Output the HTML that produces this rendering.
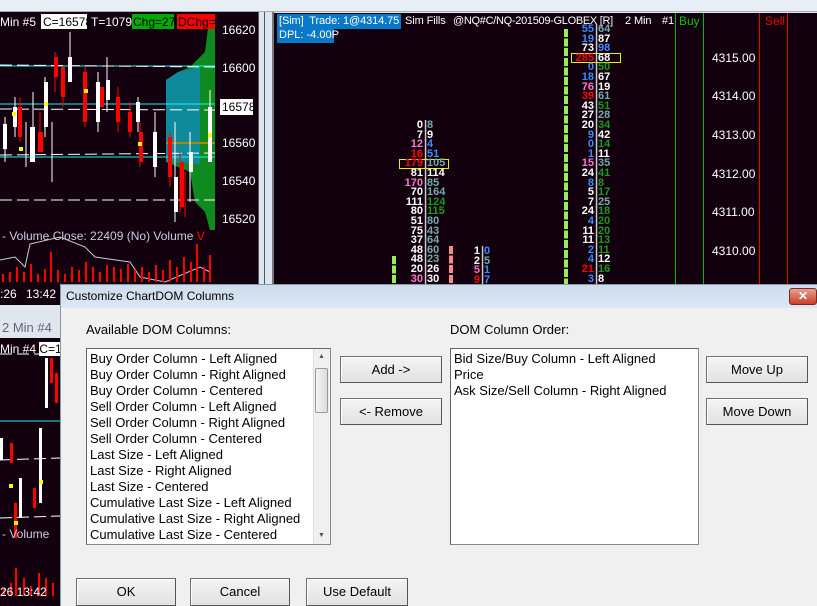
<!DOCTYPE html>
<html><head><meta charset="utf-8"><style>
*{margin:0;padding:0;box-sizing:border-box}
body{width:817px;height:606px;overflow:hidden;background:#dce6f0;position:relative;font-family:"Liberation Sans",sans-serif}
.a{position:absolute}
.dk{background:#12000f}
.n{position:absolute;font:bold 11px "Liberation Sans",sans-serif;line-height:10px;white-space:nowrap}
.btn{position:absolute;background:linear-gradient(#f4f4f4,#e2e2e2);border:1px solid #707070;border-right-color:#555;border-bottom-color:#555;box-shadow:inset 1px 1px 0 #fff;font-size:13px;color:#000;text-align:center;line-height:26px}
.lb{position:absolute;background:#fff;border:1px solid #828790;border-top-color:#666;border-left-color:#666;font-size:13px;line-height:16px;color:#000;padding:2px 3px;white-space:nowrap;overflow:hidden}
.t{font-size:12px;color:#fff;position:absolute;white-space:nowrap}
.h{font-size:11px;letter-spacing:-0.1px;top:15px}
</style></head><body>
<div class="a" style="left:0;top:0;width:817px;height:12px;background:#e8eef5;border-bottom:1px solid #aab"></div>
<div class="a dk" style="left:0;top:12px;width:258px;height:293px"></div>
<div class="a" style="left:258px;top:12px;width:1px;height:293px;background:#555"></div>
<div class="a" style="left:264px;top:12px;width:1px;height:272px;background:#555"></div>
<div class="a" style="left:272px;top:12px;width:2px;height:272px;background:#777"></div>
<svg class="a" style="left:0;top:12px" width="258" height="293">
<polygon points="215,15 208,16 205,40 190,55 178,60 166,68 166,150 190,160 195,190 205,200 210,218 215,218" fill="#0e8a1e"/>
<polygon points="200,55 178,60 166,68 166,150 200,152" fill="#0f8a9a"/>
<line x1="0" y1="54" x2="215" y2="54" stroke="#2ee" stroke-width="1"/>
<line x1="0" y1="92" x2="215" y2="92" stroke="#2ee"/>
<line x1="0" y1="145" x2="215" y2="145" stroke="#2ee"/>
<line x1="166" y1="131" x2="215" y2="131" stroke="#a80" stroke-width="2"/>
<path d="M0,53 L215,55 M0,97 L215,98 M0,143 L215,141 M0,188 L215,188" stroke="#fff" stroke-dasharray="12,5" fill="none"/>
<g stroke="#fff">
<line x1="5" y1="105" x2="5" y2="150"/><line x1="15" y1="85" x2="15" y2="125"/><line x1="33" y1="80" x2="33" y2="130"/><line x1="52" y1="110" x2="52" y2="170"/><line x1="26" y1="110" x2="26" y2="155"/><line x1="45" y1="65" x2="45" y2="125"/><line x1="70" y1="20" x2="70" y2="70"/><line x1="98" y1="60" x2="98" y2="120"/><line x1="107" y1="45" x2="107" y2="100"/><line x1="138" y1="85" x2="138" y2="120"/><line x1="155" y1="100" x2="155" y2="165"/><line x1="175" y1="110" x2="175" y2="210"/><line x1="190" y1="120" x2="190" y2="190"/><line x1="210" y1="78" x2="210" y2="150"/>
</g>
<g fill="#fff"><rect x="3" y="112" width="4" height="25"/><rect x="13" y="95" width="4" height="20"/><rect x="30" y="115" width="5" height="35"/><rect x="44" y="70" width="4" height="45"/><rect x="68" y="45" width="4" height="25"/><rect x="96" y="70" width="4" height="40"/><rect x="106" y="68" width="4" height="20"/><rect x="136" y="90" width="4" height="20"/><rect x="153" y="120" width="4" height="35"/><rect x="174" y="165" width="4" height="35"/><rect x="189" y="140" width="4" height="20"/><rect x="208" y="95" width="4" height="55"/></g>
<g stroke="#f00"><line x1="20" y1="85" x2="20" y2="130"/><line x1="40" y1="100" x2="40" y2="140"/><line x1="55" y1="40" x2="55" y2="80"/><line x1="63" y1="60" x2="63" y2="95"/><line x1="85" y1="55" x2="85" y2="115"/><line x1="118" y1="75" x2="118" y2="120"/><line x1="130" y1="90" x2="130" y2="125"/><line x1="140" y1="110" x2="140" y2="155"/><line x1="170" y1="120" x2="170" y2="175"/><line x1="180" y1="140" x2="180" y2="200"/><line x1="185" y1="160" x2="185" y2="205"/></g>
<g fill="#f00"><rect x="18" y="95" width="4" height="30"/><rect x="38" y="120" width="5" height="20"/><rect x="54" y="45" width="4" height="20"/><rect x="61" y="55" width="4" height="30"/><rect x="83" y="60" width="4" height="50"/><rect x="100" y="75" width="4" height="20"/><rect x="116" y="85" width="4" height="25"/><rect x="128" y="100" width="4" height="20"/><rect x="139" y="120" width="4" height="30"/><rect x="168" y="125" width="4" height="40"/><rect x="180" y="150" width="4" height="45"/></g>
<g fill="#ff0"><rect x="12" y="100" width="4" height="4"/><rect x="44" y="90" width="4" height="4"/><rect x="84" y="77" width="4" height="4"/><rect x="138" y="130" width="4" height="4"/><rect x="19" y="135" width="4" height="4"/><rect x="208" y="121" width="4" height="4"/></g>
<rect x="220" y="87" width="33" height="16" fill="#fff"/>
<g fill="#fff" font-family="Liberation Sans" font-size="12"><text x="222" y="22">16620</text><text x="222" y="60">16600</text><text x="222" y="135">16560</text><text x="222" y="173">16540</text><text x="222" y="211">16520</text><text x="222" y="99" fill="#000">16578</text></g>
<g font-family="Liberation Sans" font-size="12" fill="#fff"><rect x="41" y="2" width="46" height="15" fill="#fff"/><rect x="132" y="2" width="42" height="15" fill="#0a0"/><rect x="177" y="2" width="38" height="15" fill="#f00"/>
<text x="0" y="14">Min   #5</text><text x="43" y="14" fill="#000">C=16578</text><text x="91" y="14">T=1079</text><text x="133" y="14" fill="#000">Chg=27</text><text x="178" y="14" fill="#000">DChg=</text>
<text x="2" y="228" fill="#ccd">- Volume  Close: 22409   (No)  Volume  <tspan fill="#f00">V</tspan></text>
<text x="0" y="286">:26</text><text x="26" y="286">13:42</text></g>
<path d="M0,248 L15,245 L25,255 L30,232 L60,225 L85,235 L95,245 L130,250 L140,265 L165,270 L200,255 L210,260" stroke="#ccc" fill="none"/>
<g fill="#f00"><rect x="2" y="262" width="2" height="8"/><rect x="9" y="260" width="2" height="10"/><rect x="16" y="255" width="2" height="15"/><rect x="23" y="260" width="2" height="10"/><rect x="30" y="252" width="2" height="18"/><rect x="37" y="262" width="2" height="8"/><rect x="44" y="257" width="2" height="13"/><rect x="50" y="240" width="2" height="30"/><rect x="57" y="258" width="2" height="12"/><rect x="64" y="262" width="2" height="8"/><rect x="71" y="255" width="2" height="15"/><rect x="78" y="258" width="2" height="12"/><rect x="85" y="250" width="2" height="20"/><rect x="92" y="255" width="2" height="15"/><rect x="99" y="260" width="2" height="10"/><rect x="106" y="253" width="2" height="17"/><rect x="113" y="255" width="2" height="15"/><rect x="120" y="257" width="2" height="13"/><rect x="127" y="252" width="2" height="18"/><rect x="134" y="258" width="2" height="12"/><rect x="141" y="255" width="2" height="15"/><rect x="148" y="260" width="2" height="10"/><rect x="155" y="253" width="2" height="17"/><rect x="162" y="258" width="2" height="12"/><rect x="169" y="248" width="2" height="22"/><rect x="176" y="255" width="2" height="15"/><rect x="183" y="245" width="2" height="25"/><rect x="190" y="250" width="2" height="20"/><rect x="196" y="232" width="2" height="38"/><rect x="203" y="255" width="2" height="15"/><rect x="209" y="243" width="2" height="27"/></g>
</svg>
<div class="a" style="left:0;top:305px;width:60px;height:33px;background:#dfe6ee"></div>
<div class="a" style="left:2px;top:320px;font-size:13px;color:#667">2 Min  #4</div>
<div class="a dk" style="left:0;top:338px;width:60px;height:268px"></div>
<div class="a" style="left:0;top:342px;font-size:12px;color:#fff">Min  #4 <span style="background:#fff;color:#000">C=1</span></div>
<svg class="a" style="left:0;top:338px" width="60" height="268">
<line x1="0" y1="83" x2="60" y2="83" stroke="#2ee"/>
<path d="M0,16 L60,16 M0,122 L60,120 M0,180 L60,178" stroke="#fff" stroke-dasharray="12,5"/>
<g fill="#fff"><rect x="0" y="100" width="3" height="22"/><rect x="19" y="140" width="3" height="40"/><rect x="39" y="90" width="3" height="75"/><rect x="45" y="20" width="3" height="50"/></g>
<g fill="#f00"><rect x="10" y="105" width="3" height="20"/><rect x="14" y="165" width="3" height="35"/><rect x="33" y="150" width="3" height="20"/><rect x="50" y="20" width="3" height="25"/><rect x="55" y="35" width="3" height="30"/></g>
<g fill="#ff0"><rect x="9" y="146" width="4" height="4"/><rect x="14" y="183" width="4" height="4"/><rect x="39" y="142" width="4" height="4"/></g>
<text x="2" y="200" fill="#ccd" font-size="12" font-family="Liberation Sans">- Volume</text>
<g fill="#f00"><rect x="3" y="250" width="2" height="8"/><rect x="10" y="245" width="2" height="13"/><rect x="15" y="230" width="2" height="28"/><rect x="23" y="240" width="2" height="18"/><rect x="30" y="248" width="2" height="10"/><rect x="38" y="235" width="2" height="23"/><rect x="45" y="240" width="2" height="18"/><rect x="52" y="245" width="2" height="13"/></g>
<text x="0" y="258" fill="#fff" font-size="12" font-family="Liberation Sans">26  13:42</text>
</svg>
<div class="a dk" style="left:274px;top:13px;width:543px;height:271px"></div>
<div class="a" style="left:277px;top:14px;width:124px;height:15px;background:#0a78c8"></div>
<div class="a" style="left:277px;top:29px;width:57px;height:14px;background:#0a78c8"></div>
<div class="t h" style="left:279px">[Sim]&nbsp; Trade: 1@4314.75</div>
<div class="t h" style="left:405px">Sim Fills</div>
<div class="t h" style="left:453px;letter-spacing:-0.3px">@NQ#C/NQ-201509-GLOBEX [R]</div>
<div class="t h" style="left:625px">2 Min</div>
<div class="t h" style="left:662px">#1</div>
<div class="t" style="left:279px;top:29px;font-size:11px">DPL: -4.00P</div>
<div class="t" style="left:679px;top:14px;color:#1b1">Buy</div>
<div class="t" style="left:765px;top:14px;color:#e00">Sell</div>
<div class="a" style="left:675px;top:13px;width:1px;height:271px;background:#0b0"></div>
<div class="a" style="left:703px;top:13px;width:1px;height:271px;background:#0b0"></div>
<div class="a" style="left:759px;top:13px;width:1px;height:271px;background:#e00"></div>
<div class="a" style="left:787px;top:13px;width:1px;height:271px;background:#e00"></div>
<div class="t" style="left:712px;top:51px">4315.00</div>
<div class="t" style="left:712px;top:89px">4314.00</div>
<div class="t" style="left:712px;top:128px">4313.00</div>
<div class="t" style="left:712px;top:167px">4312.00</div>
<div class="t" style="left:712px;top:205px">4311.00</div>
<div class="t" style="left:712px;top:244px">4310.00</div>
<div class="a" style="left:564px;top:29px;width:4px;height:255px;background:repeating-linear-gradient(#9e5 0 8px,transparent 8px 9.6px)"></div>
<div class="a" style="left:392px;top:256px;width:4px;height:28px;background:repeating-linear-gradient(#9e5 0 8px,transparent 8px 9.6px)"></div>
<div class="a" style="left:449px;top:246px;width:4px;height:38px;background:repeating-linear-gradient(#f88 0 8px,transparent 8px 9.6px)"></div>
<div class="a" style="left:399px;top:159px;width:50px;height:10px;border:1px solid #ee0"></div>
<div class="a" style="left:571px;top:53px;width:50px;height:10px;border:1px solid #ee0"></div>
<script>
function col(x,y0,rows){var h='';rows.forEach(function(r,i){var y=y0+i*9.6;h+='<div class="n" style="left:'+(x-40)+'px;top:'+y+'px;width:38px;text-align:right;color:'+r[1]+'">'+r[0]+'</div><div class="n" style="left:'+(x-1)+'px;top:'+y+'px;color:#ccc">|</div><div class="n" style="left:'+(x+2)+'px;top:'+y+'px;color:'+r[3]+'">'+r[2]+'</div>';});document.body.insertAdjacentHTML('beforeend',h);}
var W='#fff',B='#3a8cff',T='#7aa',G='#1a9a1a',R='#f00',P='#f7c';
col(425,120,[['0',W,'8',T],['7',W,'9',W],['12',P,'4',B],['16',R,'51',B],['179',R,'105',T],['81',W,'114',W],['170',P,'85',T],['70',W,'164',T],['111',W,'124',G],['80',W,'115',G],['51',W,'80',T],['75',W,'43',T],['37',W,'64',T],['48',W,'60',T],['48',W,'23',T],['20',W,'26',W],['30',P,'30',W]]);
col(482,246,[['1',W,'0',B],['2',W,'5',T],['5',P,'1',B],['9',R,'7',B]]);
col(596,24,[['55',B,'64',T],['19',B,'87',W],['73',W,'98',B],['285',R,'68',W],['0',B,'50',G],['18',B,'67',W],['76',P,'19',W],['39',R,'61',T],['43',W,'51',G],['27',W,'28',T],['20',W,'34',G],['9',B,'42',W],['0',B,'14',G],['1',B,'11',W],['15',P,'35',T],['24',W,'41',G],['8',B,'8',G],['5',W,'17',G],['7',W,'25',T],['24',W,'18',G],['4',B,'20',G],['11',W,'20',G],['11',W,'13',G],['2',B,'11',G],['4',B,'12',W],['21',R,'16',G],['3',B,'8',W]]);
</script>
<div class="a" style="left:60px;top:284px;width:757px;height:322px;background:#f0f0f0;border-left:1px solid #8899aa;border-top:1px solid #8899aa"></div>
<div class="a" style="left:61px;top:285px;width:756px;height:23px;background:linear-gradient(#cddcec,#dbe7f3)"></div>
<div class="a" style="left:66px;top:289px;font-size:12px;color:#000">Customize ChartDOM Columns</div>
<div class="a" style="left:789px;top:288px;width:28px;height:17px;background:linear-gradient(#e6a090,#c8402a);border:1px solid #7a2a20;border-radius:3px;color:#fff;font-weight:bold;font-size:12px;text-align:center;line-height:15px">✕</div>
<div class="a" style="left:86px;top:322px;font-size:13px;color:#000">Available DOM Columns:</div>
<div class="a" style="left:450px;top:322px;font-size:13px;color:#000">DOM Column Order:</div>
<div class="lb" style="left:86px;top:348px;width:245px;height:197px">Buy Order Column - Left Aligned<br>Buy Order Column - Right Aligned<br>Buy Order Column - Centered<br>Sell Order Column - Left Aligned<br>Sell Order Column - Right Aligned<br>Sell Order Column - Centered<br>Last Size - Left Aligned<br>Last Size - Right Aligned<br>Last Size - Centered<br>Cumulative Last Size - Left Aligned<br>Cumulative Last Size - Right Aligned<br>Cumulative Last Size - Centered</div>
<div class="a" style="left:313px;top:349px;width:17px;height:195px;background:#f0f0f0;border-left:1px solid #e0e0e0"></div>
<div class="a" style="left:315px;top:368px;width:13px;height:45px;background:linear-gradient(90deg,#f4f4f4,#dcdcdc);border:1px solid #999;border-radius:2px"></div>
<div class="a" style="left:318px;top:353px;font-size:7px;color:#555">▲</div>
<div class="a" style="left:318px;top:532px;font-size:7px;color:#555">▼</div>
<div class="lb" style="left:450px;top:348px;width:249px;height:197px">Bid Size/Buy Column - Left Aligned<br>Price<br>Ask Size/Sell Column - Right Aligned</div>
<div class="btn" style="left:340px;top:356px;width:102px;height:27px">Add -&gt;</div>
<div class="btn" style="left:340px;top:398px;width:102px;height:27px">&lt;- Remove</div>
<div class="btn" style="left:706px;top:356px;width:102px;height:27px">Move Up</div>
<div class="btn" style="left:706px;top:398px;width:102px;height:27px">Move Down</div>
<div class="btn" style="left:76px;top:578px;width:100px;height:28px">OK</div>
<div class="btn" style="left:190px;top:578px;width:100px;height:28px">Cancel</div>
<div class="btn" style="left:306px;top:578px;width:102px;height:28px">Use Default</div>
</body></html>
